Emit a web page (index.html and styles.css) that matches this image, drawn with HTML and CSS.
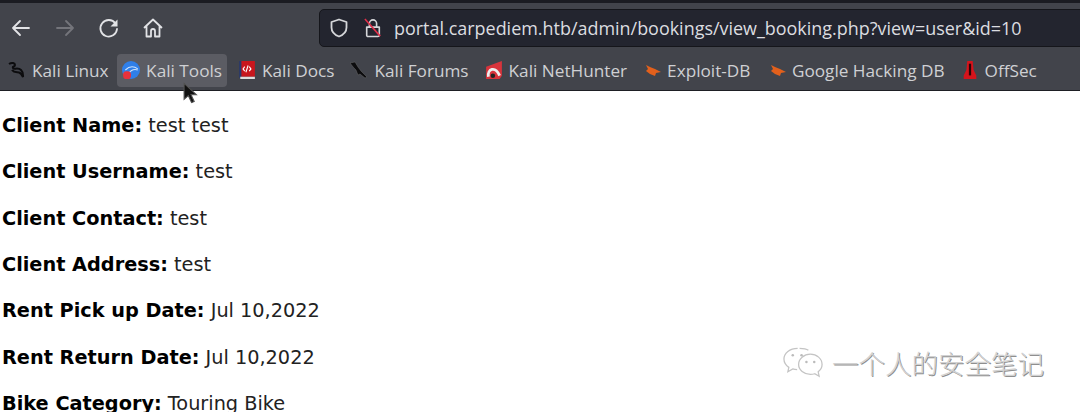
FILE: index.html
```html
<!DOCTYPE html>
<html lang="en">
<head>
<meta charset="utf-8">
<title>view_booking</title>
<link rel="stylesheet" href="styles.css">
</head>
<body>
<header class="chrome">
  <div class="tabstrip"></div>
  <div class="navbar">
    <div class="navbtns">
      <svg class="ico" viewBox="0 0 22 22"><path class="st" d="M19 11H3M10 4l-7 7 7 7"/></svg>
      <svg class="ico dim" viewBox="0 0 22 22"><path class="st" d="M3 11h16M12 4l7 7-7 7"/></svg>
      <svg class="ico" viewBox="0 0 22 22"><path class="st" d="M17.500 6.500A8.300 8.300 0 1 0 19 12"/><path class="fl" d="M19.500 2.500v7h-7z"/></svg>
      <svg class="ico" viewBox="0 0 22 22"><path class="st" d="M2.500 10.500 11 2.500l8.500 8M4.500 9v10.500h4.500v-5.500a2 2 0 0 1 4 0v5.500h4.500V9"/></svg>
    </div>
    <div class="urlbar">
      <svg class="shield" viewBox="0 0 20 20"><path class="st" d="M10 1.500 2.500 4v5.500c0 4.500 3.500 7.500 7.500 9 4-1.500 7.500-4.500 7.500-9V4z"/></svg>
      <svg class="lock" viewBox="0 0 20 22"><path class="st" d="M6 9V6a4 4 0 0 1 8 0v3M3 10h14v9a1.500 1.500 0 0 1-1.500 1.500h-11A1.500 1.500 0 0 1 3 19z"/><path class="slash" d="M1 1l17 19"/></svg>
      <span class="url">portal.carpediem.htb/admin/bookings/view_booking.php?view=user&amp;id=10</span>
    </div>
  </div>
  <nav class="bookmarks">
    <a class="bm bm-tight"><svg class="fav" viewBox="0 0 18 18"><path class="dragon" d="M1 3c3-2 6-1 6 1s-3 1-2 3 5-1 8 2 2 5 2 7c-1-2-2-4-4-4.500S6 12 4 9"/></svg>Kali Linux</a>
    <a class="bm hover"><svg class="fav" viewBox="0 0 16 16"><circle cx="8" cy="8" r="8" fill="#2f7fe8"/><path d="M3 8c3-3 7-4 11-1M6 11c2-3 5-4 8-3" stroke="#cfe3fb" fill="none"/><rect x="1" y="9" width="7" height="7" rx="3" fill="#e8323c"/></svg>Kali Tools</a>
    <a class="bm"><svg class="fav" viewBox="0 0 16 16"><rect x="2" y="0" width="13" height="14" fill="#c8161d"/><rect x="1" y="0" width="2" height="15" fill="#2a3a6a"/><rect x="2" y="14" width="13" height="2" fill="#ddd"/><path d="M6 5 4.500 7 6 9M10 5l1.500 2L10 9M9 4 7 10" stroke="#fff" fill="none"/></svg>Kali Docs</a>
    <a class="bm"><svg class="fav" viewBox="0 0 18 18"><path class="sword" d="M0 2l5-1 3 5 3 4 6 6-2 1-5-4-2 1-2-5-2-2z"/></svg>Kali Forums</a>
    <a class="bm"><svg class="fav" viewBox="0 0 16 16"><path d="M1 5 15 0v13l-2 3H1z" fill="#d8343c"/><path d="M3 14C2 7 9 4 13 13" stroke="#eee" stroke-width="2.500" fill="none"/><circle cx="7" cy="13" r="2" fill="#222"/></svg>Kali NetHunter</a>
    <a class="bm bm-wide"><svg class="fav" viewBox="0 0 18 18"><path class="bug" d="M3 4l4 2 5 2 6 3-5 1-1 3-5-2-4-3 2-2z"/></svg>Exploit-DB</a>
    <a class="bm"><svg class="fav" viewBox="0 0 18 18"><path class="bug" d="M3 4l4 2 5 2 6 3-5 1-1 3-5-2-4-3 2-2z"/></svg>Google Hacking DB</a>
    <a class="bm"><svg class="fav" viewBox="0 0 16 20"><path d="M5 0h6l1 10 3 6v4H1v-4l3-6z" fill="#d5141c"/><path d="M8 3v13" stroke="#2a0507" stroke-width="2.500"/></svg>OffSec</a>
  </nav>
</header>
<svg class="cursor" viewBox="0 0 14 20"><path d="M1 1v15l4-3.500 3 6.500 2.500-1-3-6.500h5z" fill="#111" stroke="#555"/></svg>
<main class="details">
  <p><b>Client Name:</b> test test</p>
  <p><b>Client Username:</b> test</p>
  <p><b>Client Contact:</b> test</p>
  <p><b>Client Address:</b> test</p>
  <p><b>Rent Pick up Date:</b> Jul 10,2022</p>
  <p><b>Rent Return Date:</b> Jul 10,2022</p>
  <p><b>Bike Category:</b> Touring Bike</p>
</main>
<div class="watermark">
  <svg class="wechat" viewBox="0 0 44 34"><path class="wm" d="M16 2C8 2 2 7 2 13c0 3.500 2 6.500 5 8.500L6 26l5-3c1.500.5 3 .7 4.500.7"/><path class="wm" d="M29 8c6.500 0 12 4.500 12 10.500 0 3-1.500 5.500-4 7.500l1 4.500-4.500-2.500c-1.500.4-3 .6-4.500.6-6.500 0-12-4.500-12-10.100S22.500 8 29 8zM27 4c-2-1.500-6-2-9-2"/><circle cx="11" cy="9" r="1.300" fill="#bbb"/><circle cx="20" cy="9" r="1.300" fill="#bbb"/><circle cx="25" cy="16" r="1.300" fill="#bbb"/><circle cx="33" cy="16" r="1.300" fill="#bbb"/></svg>
  <span class="wmtext">一个人的安全笔记</span>
</div>
</body>
</html>
```
FILE: styles.css
```css
* { box-sizing: border-box; }
html, body { margin: 0; padding: 0; }
body {
  width: 1080px;
  height: 412px;
  overflow: hidden;
  position: relative;
  background: #fff;
  font-family: "DejaVu Sans", sans-serif;
}
.chrome {
  height: 91px;
  background: #42444b;
  border-bottom: 1px solid #1e1f24;
  display: flex;
  flex-direction: column;
}
.tabstrip { height: 3px; background: #1b1c22; }
.navbar {
  height: 46px;
  padding: 6px 0 2px 10px;
  display: flex;
  align-items: center;
}
.navbtns {
  display: flex;
  gap: 22px;
  width: 309px;
  align-items: center;
}
.ico { width: 22px; height: 22px; color: #e2e3e6; flex: none; }
.ico.dim { color: #74757b; }
.st { fill: none; stroke: currentColor; stroke-width: 1.800; stroke-linejoin: round; stroke-linecap: round; }
.fl { fill: currentColor; }
.urlbar {
  flex: 1;
  height: 38px;
  margin-right: -8px;
  background: #23252f;
  border: 1px solid #15161b;
  border-radius: 5px;
  display: flex;
  align-items: center;
  padding-left: 9px;
  color: #d8d9dc;
}
.shield { width: 20px; height: 20px; flex: none; color: #d5d6d9; }
.lock { width: 18px; height: 20px; flex: none; margin-left: 15px; color: #d5d6d9; }
.slash { stroke: #e0304a; stroke-width: 1.800; fill: none; }
.url {
  margin-left: 12px;
  font-family: "Open Sans", "Noto Sans", sans-serif;
  font-size: 17.950px;
  color: #dcdde0;
  white-space: nowrap;
}
.bookmarks {
  height: 41px;
  padding: 4px 0 3px 3px;
  display: flex;
  align-items: center;
  gap: 6px;
}
.bm {
  display: flex;
  align-items: center;
  gap: 6px;
  height: 33px;
  padding: 0 5px;
  border-radius: 4px;
  font-family: "Open Sans", "Noto Sans", sans-serif;
  font-size: 17.200px;
  color: #cfd0d3;
  white-space: nowrap;
}
.bm-tight { margin-right: -2.500px; }
.bm-wide { margin-right: 1.500px; }
.bm.hover { background: #5b5c63; }
.fav { width: 18px; height: 18px; flex: none; }
.dragon { fill: none; stroke: #0c0c0e; stroke-width: 2; }
.sword { fill: #0c0c0e; stroke: #777; stroke-width: .4; }
.bug { fill: #e2601c; }
.cursor {
  position: absolute;
  left: 183px;
  top: 82px;
  width: 15px;
  height: 22px;
}
.details { padding: 23px 0 0 2px; color: #222; font-size: 19.300px; line-height: 23.350px; }
.details p { margin: 0 0 23px; white-space: nowrap; }
.details b { color: #000; }
.watermark {
  position: absolute;
  left: 782px;
  top: 343px;
  display: flex;
  align-items: center;
  gap: 7px;
}
.wechat { width: 43px; height: 34px; }
.wm { fill: none; stroke: #c4c4c4; stroke-width: 1.300; }
.wmtext {
  font-family: "Noto Sans CJK SC", sans-serif;
  font-size: 26.500px;
  font-weight: 300;
  color: #d2d2d2;
  text-shadow: 1px 1px 0 #8f8f8f;
  white-space: nowrap;
}
```
